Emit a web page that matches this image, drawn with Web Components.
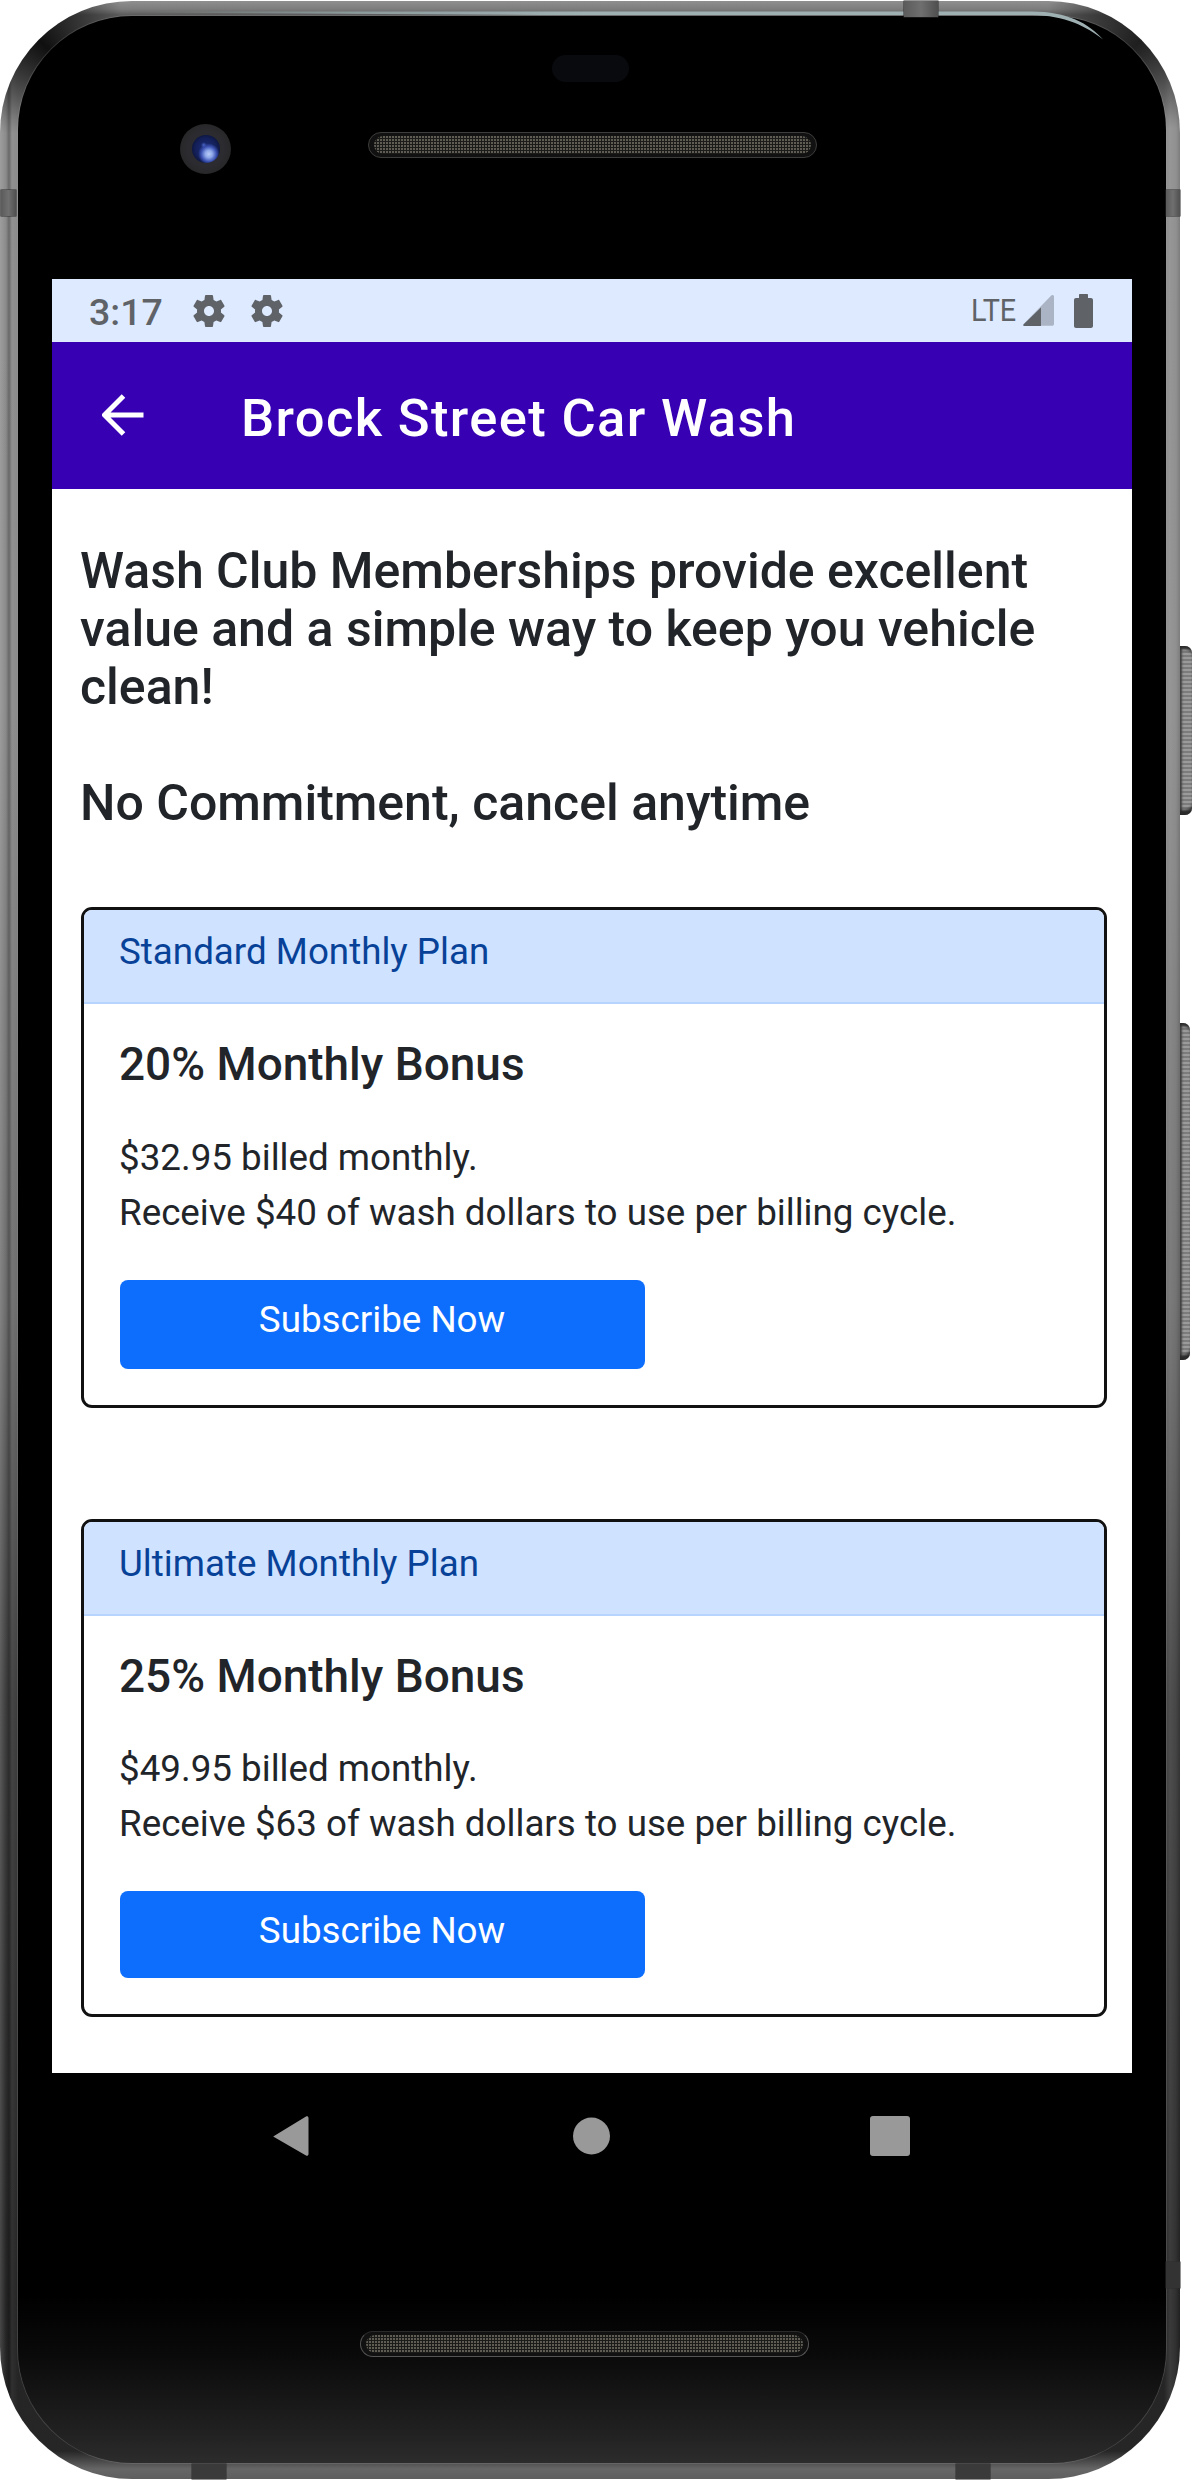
<!DOCTYPE html>
<html lang="en"><head><meta charset="utf-8"><title>Brock Street Car Wash</title>
<style>
html,body{margin:0;padding:0;background:#fff;font-family:Roboto,"Liberation Sans",sans-serif}
</style></head><body>
<phone-frame>
  <status-bar></status-bar>
  <app-bar>Brock Street Car Wash</app-bar>
  <club-page>
    <plan-card slot="a" plan="Standard Monthly Plan" bonus="20% Monthly Bonus" price="$32.95 billed monthly." receive="Receive $40 of wash dollars to use per billing cycle." btn="89" pad="36"></plan-card>
    <plan-card slot="b" plan="Ultimate Monthly Plan" bonus="25% Monthly Bonus" price="$49.95 billed monthly." receive="Receive $63 of wash dollars to use per billing cycle." btn="87" pad="36"></plan-card>
  </club-page>
</phone-frame>
<script>
const def=(n,html,init)=>customElements.define(n,class extends HTMLElement{constructor(){super();const s=this.attachShadow({mode:'open'});s.innerHTML=html;init&&init(s,this)}connectedCallback(){this.ready&&this.ready()}});

def('phone-frame',`<style>
:host{display:block;position:relative;width:1194px;height:2480px;overflow:hidden}
.shell{position:relative;box-sizing:border-box;width:1180px;height:2478px;margin-top:1px;padding:15px 14px 16px 18px;border-radius:132px;
 background:conic-gradient(from 270deg at 132px 132px,transparent 0,rgba(0,0,0,.85) 45deg,transparent 85deg,transparent 360deg),conic-gradient(from 0deg at 1048px 132px,transparent 0,rgba(0,0,0,.7) 45deg,transparent 88deg,transparent 360deg),linear-gradient(90deg,rgba(255,255,255,.16),rgba(255,255,255,0) 6px,rgba(0,0,0,.25) 9px,rgba(255,255,255,.05) 12px,transparent 18px,transparent 1164px,rgba(255,255,255,.1) 1170px,rgba(255,255,255,.05) 1176px,rgba(0,0,0,.1)),linear-gradient(180deg,#8f8f8f 0,#7d7d7d 8px,#5a5a5a 14px,#8b8b8b 120px,#8a8a8a 700px,#6c6c6c 1300px,#3c3c3c 1700px,#242424 2300px,#262626 2450px,#666 2468px,#5e5e5e 100%)}
.bezel{position:relative;box-sizing:border-box;height:100%;border-radius:114px;padding:263px 34px 0;
 background:linear-gradient(180deg,#000 2280px,#0a0a0a 2340px,#222 2420px,#2c2c2c 2447px);box-shadow:0 0 0 1px rgba(170,170,170,.22)}
.screen{height:1794px;display:flex;flex-direction:column;background:#fff;overflow:hidden}
nav{display:grid;grid-template-columns:repeat(3,300px);justify-content:center;padding-top:42px;margin-left:-4px}
nav svg{display:block;margin:auto}
.sensor{position:absolute;left:534px;top:39px;width:77px;height:27px;border-radius:14px;background:#090a0e}
.grill{position:absolute;box-sizing:border-box;height:26px;border-radius:13px;border:1.5px solid #3d3d3b;background:#111;padding:3px 5px}
.grill i{display:block;height:100%;border-radius:9px;background:radial-gradient(circle at 1px 1px,#5f5c54 .9px,transparent 1.3px) 0 0/3px 3px,#1b1b19}
.g1{left:350px;top:116px;width:449px}
.g2{left:342px;top:2315px;width:449px;border-color:#555;border-top-color:#2a2a2a}
.cam{position:absolute;left:162px;top:108px;width:51px;height:50px;border-radius:50%;background:radial-gradient(circle,#2c2c30 50%,#252527 80%,#161616 100%);display:grid;place-items:center}
.cam i{display:block;width:28px;height:28px;border-radius:50%;background:radial-gradient(circle at 60% 68%,#b9cdf6 0,#8fa9ea 14%,#3a50b0 30%,transparent 42%),radial-gradient(circle at 42% 36%,#4a64c8 0,transparent 12%),radial-gradient(circle,#1d2f7c 0,#131f58 55%,#060a1a 100%)}
.glare{position:absolute;left:-18px;top:-16px;pointer-events:none}
.seam{position:absolute;background:linear-gradient(90deg,#5b5b5b,#6f6f6f,#4f4f4f);box-shadow:0 0 0 .5px #2c2c2c}
.btn{position:absolute;left:1180px;width:12px;border-radius:0 7px 7px 0;background:repeating-linear-gradient(0deg,#9a9a9a 0,#9a9a9a 2px,#7c7c7c 2px,#7c7c7c 4px);box-shadow:inset 0 5px 3px -2px #2a2a2a,inset 0 -7px 3px -2px #2a2a2a,inset 2px 0 2px #444}
</style>
<div class="shell"><div class="bezel">
  <div class="sensor"></div>
  <div class="grill g1"><i></i></div>
  <div class="cam"><i></i></div>
  <div class="screen"><slot></slot></div>
  <nav>
    <svg width="37" height="42" viewBox="0 0 37 42"><path d="M2 21 34 1.5c1.2-.7 2.5 0 2.5 1.500v36c0 1.500-1.300 2.200-2.500 1.500L2 22c-.8-.3-.8-.7 0-1z" fill="#999"/></svg>
    <svg width="38" height="38" viewBox="0 0 38 38" style="transform:translateX(1.5px)"><circle cx="19" cy="19" r="18.500" fill="#999"/></svg>
    <svg width="40" height="40" viewBox="0 0 40 40"><rect width="40" height="40" rx="3" fill="#999"/></svg>
  </nav>
  <div class="grill g2"><i></i></div>
</div>
<svg class="glare" width="1180" height="70" viewBox="0 0 1180 70"><defs><linearGradient id="gl" x1="160" x2="600" y1="0" y2="0" gradientUnits="userSpaceOnUse"><stop offset="0" stop-color="#8fa0a0" stop-opacity="0"/><stop offset=".5" stop-color="#8d9b9c"/><stop offset="1" stop-color="#9fb0b3"/></linearGradient></defs><path d="M160 26.500H1050c35 0 57 12 71 28-16-13-38-24-71-24.500H560L160 27.500z" fill="url(#gl)"/></svg>
<div class="seam" style="left:904px;top:0;width:34px;height:16px"></div>
<div class="seam" style="left:192px;top:2463px;width:34px;height:15px;background:#3a3a3a"></div>
<div class="seam" style="left:956px;top:2463px;width:34px;height:15px;background:#3a3a3a"></div>
<div class="seam" style="left:1px;top:189px;width:15px;height:26px"></div>
<div class="seam" style="left:1166px;top:189px;width:14px;height:26px"></div>
<div class="seam" style="left:1166px;top:2261px;width:14px;height:26px;background:#333"></div>
</div>
<div class="btn" style="top:646px;height:169px"></div>
<div class="btn" style="top:1023px;height:337px;width:10px"></div>`);

const gear=`<svg class="g" width="40" height="40" viewBox="0 0 24 24"><path fill="currentColor" d="M19.140 12.940c.04-.3.06-.61.06-.94 0-.32-.02-.64-.07-.94l2.030-1.580c.18-.14.23-.41.12-.61l-1.920-3.320c-.12-.22-.37-.29-.59-.22l-2.390.96c-.5-.38-1.030-.7-1.620-.94l-.36-2.540c-.04-.24-.24-.41-.48-.41h-3.840c-.24 0-.43.17-.47.41l-.36 2.540c-.59.24-1.130.57-1.620.94l-2.390-.96c-.22-.08-.47 0-.59.22L2.740 8.870c-.12.21-.08.47.12.61l2.030 1.580c-.05.3-.09.63-.09.94s.02.64.07.94l-2.030 1.580c-.18.14-.23.41-.12.61l1.920 3.320c.12.22.37.29.59.22l2.390-.96c.5.38 1.030.7 1.620.94l.36 2.540c.05.24.24.41.48.41h3.840c.24 0 .44-.17.47-.41l.36-2.540c.59-.24 1.130-.56 1.620-.94l2.390.96c.22.08.47 0 .59-.22l1.920-3.320c.12-.22.07-.47-.12-.61l-2.010-1.580zM12 15c-1.650 0-3-1.350-3-3s1.350-3 3-3 3 1.350 3 3-1.350 3-3 3z"/></svg>`;
def('status-bar',`<style>
:host{display:flex;flex:none;align-items:center;box-sizing:border-box;height:63px;background:#deeaff;color:#5f6368;padding:0 39px 0 37px;font-family:Roboto,sans-serif}
.t{font-size:37.500px;font-weight:500;line-height:63px;width:100px;margin-top:3px}
svg{display:block;flex:none}
.g{margin-right:18px}
.sp{flex:1}
.l{font-size:32px;font-weight:400;display:inline-block;transform:scaleX(.9);transform-origin:0 50%;width:52px;margin-top:-1px}
</style>
<span class="t">3:17</span>
${gear}${gear}
<span class="sp"></span>
<span class="l">LTE</span>
<svg width="31" height="31" viewBox="0 0 31 31" style="margin-right:20px"><path d="M31 1.500v27.500c0 1-.8 1.800-1.800 1.800H1.500c-1.200 0-1.600-.9-.8-1.700L28 .7c1.300-1.300 3-.7 3 .8z" fill="#aab4c4"/><path d="M18 12.500V31H1.500C.3 31-.1 30.100.7 29.300z" fill="#5f6368"/></svg>
<svg width="19" height="34" viewBox="0 0 19 34"><path d="M5 1c0-.6.4-1 1-1h7c.6 0 1 .4 1 1v3h3c1.100 0 2 .9 2 2v26c0 1.100-.9 2-2 2H2c-1.100 0-2-.9-2-2V6c0-1.100.9-2 2-2h3z" fill="#5f6368"/></svg>`);

def('app-bar',`<style>
:host{display:flex;flex:none;align-items:center;box-sizing:border-box;height:147px;background:#3700b3;color:#fff;padding:0 0 0 50px;font-family:Roboto,sans-serif}
svg{display:block;flex:none;margin:-1px 97px 0 0}
span{font-size:52.500px;font-weight:500;letter-spacing:1.36px;line-height:1;margin-top:5px}
</style>
<svg width="42" height="42" viewBox="0 0 42 42"><path d="M41.500 21H3.500M21.500 2 2.500 21l19 19" fill="none" stroke="#fff" stroke-width="5"/></svg>
<span><slot></slot></span>`);

def('club-page',`<style>
:host{display:block;flex:1;box-sizing:border-box;padding:53px 25px 0 29px;background:#fff;color:#212529;font-family:Roboto,sans-serif}
p{margin:0;font-size:50px;font-weight:500;line-height:58px;margin-left:-1px}
.gap{height:58px}
.a{margin-top:75px;display:block}
.b{margin-top:111px;display:block}
</style>
<p>Wash Club Memberships provide excellent value and a simple way to keep you vehicle clean!</p>
<div class="gap"></div>
<p>No Commitment, cancel anytime</p>
<div class="a"><slot name="a"></slot></div>
<div class="b"><slot name="b"></slot></div>`);

customElements.define('plan-card',class extends HTMLElement{
 constructor(){super();this.attachShadow({mode:'open'})}
 connectedCallback(){const g=n=>this.getAttribute(n);
 this.shadowRoot.innerHTML=`<style>
:host{display:block;box-sizing:border-box;border:3px solid #111;border-radius:11px;overflow:hidden;background:#fff;color:#212529;font-family:Roboto,sans-serif}
.h{box-sizing:border-box;height:94px;padding:0 35px;background:#cfe2ff;border-bottom:2px solid #b6d4fe;color:#084298;font-size:36.750px;line-height:83.500px}
.b{padding:33px 35px ${g('pad')}px 35.500px}
h5{margin:0;font-size:45.940px;font-weight:500;line-height:55px;margin-left:-.5px}
.t{margin-top:37.500px;font-size:36.750px;line-height:55px;margin-left:-.5px}
button{display:block;box-sizing:border-box;width:525px;height:${g('btn')}px;margin-top:40px;padding:0 0 ${g('btn')-79}px;border:0;border-radius:8px;background:#0d6efd;color:#fff;font:36.750px/55px Roboto,sans-serif}
</style>
<div class="h">${g('plan')}</div>
<div class="b"><h5>${g('bonus')}</h5><div class="t">${g('price')}<br>${g('receive')}</div><button>Subscribe Now</button></div>`}
});
</script>
</body></html>
